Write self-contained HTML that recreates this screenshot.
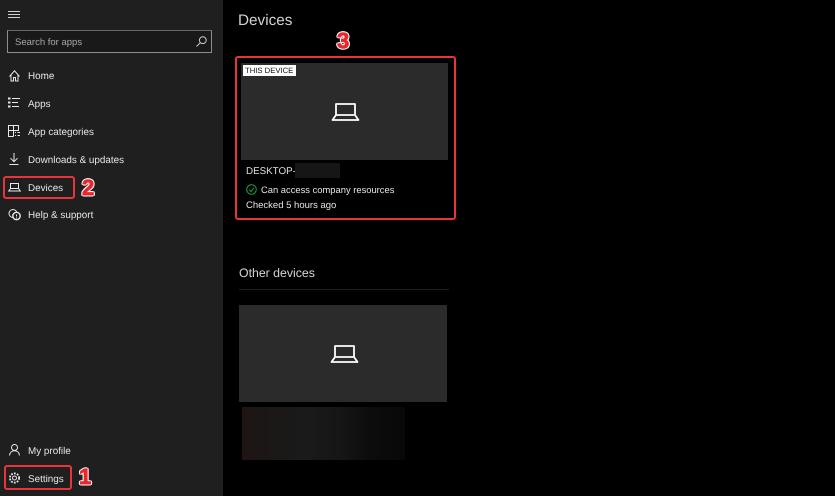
<!DOCTYPE html>
<html><head><meta charset="utf-8">
<style>
html,body{margin:0;padding:0;background:#000;}
body{width:835px;height:496px;position:relative;overflow:hidden;font-family:"Liberation Sans",sans-serif;color:#e6e6e6;text-rendering:geometricPrecision;}
#side{position:absolute;left:0;top:0;width:223px;height:496px;background:#1f1f1f;}
.t{position:absolute;white-space:nowrap;line-height:14px;font-size:9.9px;filter:blur(.25px);}
.ic{position:absolute;overflow:visible;fill:none;stroke:#e8e8e8;stroke-width:1;}
.red{position:absolute;border:2px solid #e8343a;border-radius:3px;box-sizing:border-box;}
.num{position:absolute;font-weight:bold;font-size:22px;line-height:22px;color:#e8262c;-webkit-text-stroke:.9px #e8262c;text-shadow:-1.5px 0 #fff,1.5px 0 #fff,0 -1.5px #fff,0 1.5px #fff,-1.2px -1.2px #fff,1.2px -1.2px #fff,-1.2px 1.2px #fff,1.2px 1.2px #fff;}
.card{position:absolute;background:#2b2b2b;}
</style></head><body>
<div id="side"></div>

<svg class="ic" style="left:8px;top:11px" width="12" height="8"><path d="M0 .5H12M0 3.5H12M0 6.5H12" stroke="#d0d0d0"/></svg>

<div style="position:absolute;left:7px;top:30px;width:205px;height:23px;box-sizing:border-box;border:1px solid #8e8e8e;border-top-color:#666;background:#191919"></div>
<div class="t" style="left:15px;top:36px;color:#a8a8a8;font-size:9.5px">Search for apps</div>
<svg class="ic" style="left:196px;top:36px" width="11" height="11"><circle cx="6.8" cy="4.2" r="3.4" stroke="#ccc"/><path d="M4.3 6.7L.5 10.5" stroke="#ccc"/></svg>

<svg class="ic" style="left:9px;top:70px" width="13" height="12"><path d="M.5 6.5L5.5 .8L10.5 6.5M2 5V11H4.5V7.5H6.5V11H9V5"/></svg>
<div class="t" style="left:28px;top:70px">Home</div>

<svg class="ic" style="left:8px;top:97px" width="12" height="12"><path d="M0 1.5H2.5M0 5.5H2.5M0 9.5H2.5" stroke-width="2"/><path d="M4 1.5H12M4 5.5H10M4 9.5H11"/></svg>
<div class="t" style="left:28px;top:98px">Apps</div>

<svg class="ic" style="left:8px;top:125px" width="12" height="12"><path d="M.5 .5H10.5V5.5H.5ZM5.5 .5V11.5M.5 5.5V11.5H5.5"/><path d="M7 7.5H8M9.5 7.5H12M7 10.5H8M9.5 10.5H12"/></svg>
<div class="t" style="left:28px;top:126px">App categories</div>

<svg class="ic" style="left:9px;top:153px" width="10" height="12"><path d="M5 0V8.5M1.5 5.2L5 8.7L8.5 5.2M.5 11.5H9.5"/></svg>
<div class="t" style="left:28px;top:154px">Downloads &amp; updates</div>

<div class="red" style="left:3px;top:176px;width:72px;height:23px"></div>
<svg class="ic" style="left:8px;top:183px" width="13" height="9"><path d="M2.5 .5H10.5V5.5H2.5ZM2.5 5.5L.7 8H12.3L10.5 5.5"/></svg>
<div class="t" style="left:28px;top:182px">Devices</div>
<div class="num" style="left:82px;top:177px">2</div>

<svg class="ic" style="left:8px;top:209px" width="13" height="12"><circle cx="5" cy="4.5" r="4"/><circle cx="8.5" cy="7" r="3.7" fill="#1f1f1f" stroke-width="1.4"/><path d="M8.5 5.5V7.5M8.5 8.5V9.5"/></svg>
<div class="t" style="left:28px;top:209px">Help &amp; support</div>

<svg class="ic" style="left:9px;top:444px" width="11" height="12"><circle cx="5.5" cy="3.5" r="3"/><path d="M.5 11.5C.8 8.5 2.8 6.8 5.5 6.8S10.2 8.5 10.5 11.5"/></svg>
<div class="t" style="left:28px;top:445px">My profile</div>

<div class="red" style="left:4px;top:465px;width:68px;height:25px"></div>
<svg class="ic" style="left:8px;top:472px" width="13" height="12"><circle cx="6.5" cy="6" r="2"/><circle cx="6.5" cy="6" r="4.6" stroke-width="1.8" stroke-dasharray="1.8 1.2"/></svg>
<div class="t" style="left:28px;top:473px">Settings</div>
<div class="num" style="left:79px;top:466px">1</div>

<div class="t" style="left:238px;top:11px;font-size:15.3px;line-height:20px;color:#d4d4d4">Devices</div>
<div class="num" style="left:337px;top:30px">3</div>

<div class="red" style="left:235px;top:56px;width:221px;height:164px"></div>
<div class="card" style="left:241px;top:63px;width:207px;height:97px"></div>
<div style="position:absolute;left:243px;top:65px;width:53px;height:11px;background:#fff"></div>
<div class="t" style="left:245px;top:65px;line-height:11px;font-size:7.7px;color:#111">THIS DEVICE</div>
<svg class="ic" style="left:331px;top:102px" width="29" height="19"><path d="M5 2H24V13H5ZM5 13L1.5 18H27.5L24 13" stroke="#fff" stroke-width="1.8" stroke-linejoin="round"/></svg>

<div class="t" style="left:246px;top:165px;font-size:9.8px;color:#e0e0e0">DESKTOP-</div>
<div style="position:absolute;left:295px;top:163px;width:45px;height:15px;background:#161616"></div>
<svg class="ic" style="left:246px;top:184px" width="11" height="11"><circle cx="5.5" cy="5.5" r="4.8" stroke="#1f9e3c"/><path d="M3 5.6L5 7.6L8 3.8" stroke="#1f9e3c"/></svg>
<div class="t" style="left:261px;top:183px;font-size:9.4px">Can access company resources</div>
<div class="t" style="left:246px;top:199px;font-size:9.5px">Checked 5 hours ago</div>

<div class="t" style="left:239px;top:265px;font-size:12.3px;line-height:16px;color:#d4d4d4">Other devices</div>
<div style="position:absolute;left:239px;top:289px;width:210px;height:1px;background:#1d1d1d"></div>

<div class="card" style="left:239px;top:305px;width:208px;height:97px"></div>
<svg class="ic" style="left:330px;top:344px" width="29" height="19"><path d="M5 2H24V13H5ZM5 13L1.5 18H27.5L24 13" stroke="#fff" stroke-width="1.8" stroke-linejoin="round"/></svg>

<div style="position:absolute;left:242px;top:407px;width:163px;height:53px;background:linear-gradient(90deg,#1e1413 0,#1c1716 12%,#1a1a1a 40%,#151515 62%,#0c0c0c 78%,#080808 100%)"></div>
</body></html>
